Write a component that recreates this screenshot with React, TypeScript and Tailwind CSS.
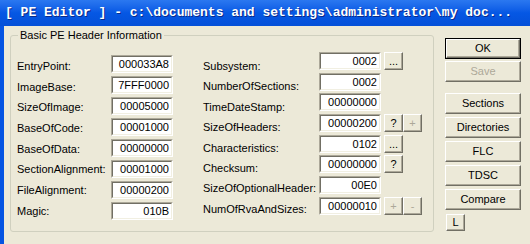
const leftRows = [
  { label: 'EntryPoint:', value: '000033A8' },
  { label: 'ImageBase:', value: '7FFF0000' },
  { label: 'SizeOfImage:', value: '00005000' },
  { label: 'BaseOfCode:', value: '00001000' },
  { label: 'BaseOfData:', value: '00000000' },
  { label: 'SectionAlignment:', value: '00001000' },
  { label: 'FileAlignment:', value: '00000200' },
  { label: 'Magic:', value: '010B' },
]

type Btn = { text: string; disabled?: boolean }

const midRows: { label: string; value: string; buttons: Btn[] }[] = [
  { label: 'Subsystem:', value: '0002', buttons: [{ text: '...' }] },
  { label: 'NumberOfSections:', value: '0002', buttons: [] },
  { label: 'TimeDateStamp:', value: '00000000', buttons: [] },
  { label: 'SizeOfHeaders:', value: '00000200', buttons: [{ text: '?' }, { text: '+', disabled: true }] },
  { label: 'Characteristics:', value: '0102', buttons: [{ text: '...' }] },
  { label: 'Checksum:', value: '00000000', buttons: [{ text: '?' }] },
  { label: 'SizeOfOptionalHeader:', value: '00E0', buttons: [] },
  { label: 'NumOfRvaAndSizes:', value: '00000010', buttons: [{ text: '+', disabled: true }, { text: '-', disabled: true }] },
]

const sideButtons = ['Sections', 'Directories', 'FLC', 'TDSC', 'Compare']

function HexBox({ value }: { value: string }) {
  return (
    <div className="h-[18px] w-[62px] border border-t-[#aca899] border-l-[#aca899] border-b-white border-r-white">
      <div className="h-full w-full border border-t-[#716f64] border-l-[#716f64] border-b-[#f1efe2] border-r-[#f1efe2] bg-white pr-[2px] text-right text-[11px] leading-[14px] text-black">
        {value}
      </div>
    </div>
  )
}

function Button({ text, disabled, className }: { text: string; disabled?: boolean; className: string }) {
  return (
    <div
      className={`${className} flex items-center justify-center border border-t-white border-l-white border-b-[#716f64] border-r-[#716f64] bg-[#ece9d8] text-[11px] shadow-[inset_-1px_-1px_0_#aca899] ${
        disabled ? 'text-[#aca899]' : 'text-black'
      }`}
    >
      {text}
    </div>
  )
}

export default function App() {
  return (
    <div className="flex h-[244px] w-[530px] flex-col overflow-hidden bg-[#ece9d8] font-['Liberation_Sans',Arial,sans-serif]">
      <div className="flex h-[26px] shrink-0 items-center bg-gradient-to-b from-[#2b78f0] via-[#0557e4] to-[#0450d8] pl-[5px] font-['Liberation_Mono',monospace] text-[13px] font-bold whitespace-nowrap text-white [text-shadow:1px_1px_0_#0a2a8a]">
        [ PE Editor ] - c:\documents and settings\administrator\my doc...
      </div>
      <div className="flex flex-1">
        <div className="w-[4px] shrink-0 bg-[#0554e2]" />
        <fieldset className="mt-[3px] ml-[6px] h-[203px] w-[424px] shrink-0 rounded-[3px] border border-[#d0d0bf] px-0">
          <legend className="ml-[7px] px-[2px] text-[11px] leading-[13px] text-black">Basic PE Header Information</legend>
          <div className="flex text-[11px] text-black">
            <div className="flex w-[100px] flex-col gap-[7.7px] pt-[18px] pl-[6px] leading-[13px]">
              {leftRows.map((r) => (
                <span key={r.label}>{r.label}</span>
              ))}
            </div>
            <div className="flex flex-col gap-[3px] pt-[13px]">
              {leftRows.map((r) => (
                <HexBox key={r.label} value={r.value} />
              ))}
            </div>
            <div className="ml-[30px] flex w-[116px] flex-col gap-[7.4px] pt-[18px] leading-[13px]">
              {midRows.map((r) => (
                <span key={r.label}>{r.label}</span>
              ))}
            </div>
            <div className="flex flex-col gap-[2.7px] pt-[10px]">
              {midRows.map((r) => (
                <div key={r.label} className="flex items-center">
                  <HexBox value={r.value} />
                  <div className="ml-[3px] flex">
                    {r.buttons.map((b, i) => (
                      <Button key={i} text={b.text} disabled={b.disabled} className="h-[18px] w-[19px]" />
                    ))}
                  </div>
                </div>
              ))}
            </div>
          </div>
        </fieldset>
        <div className="ml-[11px] flex flex-col pt-[12px]">
          <div className="border border-black">
            <Button text="OK" className="h-[19px] w-[74px]" />
          </div>
          <Button text="Save" disabled className="mt-[2px] h-[21px] w-[76px]" />
          <div className="mt-[11px] flex flex-col gap-[3px]">
            {sideButtons.map((t) => (
              <Button key={t} text={t} className="h-[21px] w-[76px]" />
            ))}
          </div>
          <Button text="L" className="mt-[4px] ml-px h-[17px] w-[19px]" />
        </div>
      </div>
    </div>
  )
}
